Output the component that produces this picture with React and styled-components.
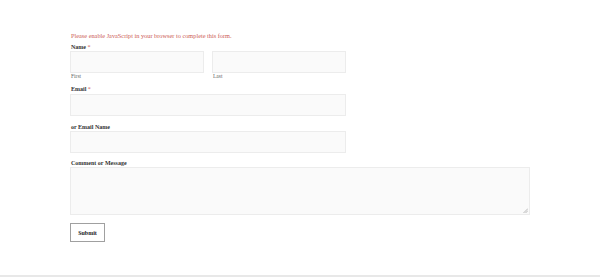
import React from 'react'
import styled, { createGlobalStyle } from 'styled-components'

const GlobalStyle = createGlobalStyle`
    html, body {
        margin: 0;
        padding: 0;
        background: #ffffff;
    }
    body {
        font-family: "Liberation Serif", "Times New Roman", serif;
        color: #222;
    }
`;

const Page = styled.div`
    display: flex;
    flex-direction: column;
    height: 277px;
    overflow: hidden;
`;

const Form = styled.form`
    display: flex;
    flex-direction: column;
    padding: 32px 0 0 70px;
    width: 460px;
`;

const Notice = styled.p`
    margin: 0 0 4px 1px;
    font-size: 6.3px;
    line-height: 8px;
    color: #cc5a55;
`;

const Field = styled.div`
    display: flex;
    flex-direction: column;
    margin-top: ${p => p.$gap || 0}px;
`;

const Label = styled.label`
    display: block;
    font-size: 6px;
    line-height: 7px;
    font-weight: bold;
    color: #333;
    margin-left: 1px;
    margin-bottom: ${p => p.$after || 0}px;
`;

const Req = styled.span`
    color: #d0605a;
    font-weight: normal;
`;

const NameRow = styled.div`
    display: flex;
    gap: 8px;
    width: 276px;
`;

const NamePart = styled.div`
    display: flex;
    flex-direction: column;
    flex: 1;
`;

const SubLabel = styled.span`
    font-size: 5.5px;
    line-height: 7px;
    margin-left: 1px;
    color: #666;
`;

const Input = styled.input`
    box-sizing: border-box;
    width: ${p => p.$width || '100%'};
    height: 22px;
    margin: 0;
    padding: 0 4px;
    border: 1px solid #ececec;
    background: #fafafa;
    font-size: 7px;
    outline: none;
`;

const AreaWrap = styled.div`
    position: relative;
    width: 460px;
`;

const TextArea = styled.textarea`
    box-sizing: border-box;
    width: 100%;
    height: 48px;
    margin: 0;
    padding: 3px;
    border: 1px solid #ececec;
    background: #fafafa;
    font-size: 7px;
    resize: none;
    outline: none;
    display: block;
`;

const Grip = styled.svg`
    position: absolute;
    right: 2px;
    bottom: 2px;
    width: 5px;
    height: 5px;
    pointer-events: none;
`;

const Submit = styled.button`
    box-sizing: border-box;
    width: 35px;
    height: 19px;
    margin-top: 8px;
    padding: 0;
    border: 1px solid #a0a0a0;
    background: #ffffff;
    font-family: "Liberation Serif", "Times New Roman", serif;
    font-size: 6px;
    font-weight: bold;
    color: #222;
    cursor: pointer;
`;

const Footer = styled.div`
    margin-top: auto;
    border-top: 2px solid #e8e8e8;
`;

const App = () => {
    return (
        <Page>
            <GlobalStyle />
            <Form onSubmit={e => e.preventDefault()}>
                <Notice>Please enable JavaScript in your browser to complete this form.</Notice>
                <Field>
                    <Label>Name <Req>*</Req></Label>
                    <NameRow>
                        <NamePart>
                            <Input type="text" />
                            <SubLabel>First</SubLabel>
                        </NamePart>
                        <NamePart>
                            <Input type="text" />
                            <SubLabel>Last</SubLabel>
                        </NamePart>
                    </NameRow>
                </Field>
                <Field $gap={6}>
                    <Label $after={1}>Email <Req>*</Req></Label>
                    <Input type="email" $width="276px" />
                </Field>
                <Field $gap={8}>
                    <Label>or Email Name</Label>
                    <Input type="text" $width="276px" />
                </Field>
                <Field $gap={7}>
                    <Label>Comment or Message</Label>
                    <AreaWrap>
                        <TextArea />
                        <Grip viewBox="0 0 5 5">
                            <path d="M0.5 5 L5 0.5 M2.5 5 L5 2.5" stroke="#a8a8a8" strokeWidth="0.8" fill="none" />
                        </Grip>
                    </AreaWrap>
                </Field>
                <div>
                    <Submit type="submit">Submit</Submit>
                </div>
            </Form>
            <Footer />
        </Page>
    )
}

export default App
